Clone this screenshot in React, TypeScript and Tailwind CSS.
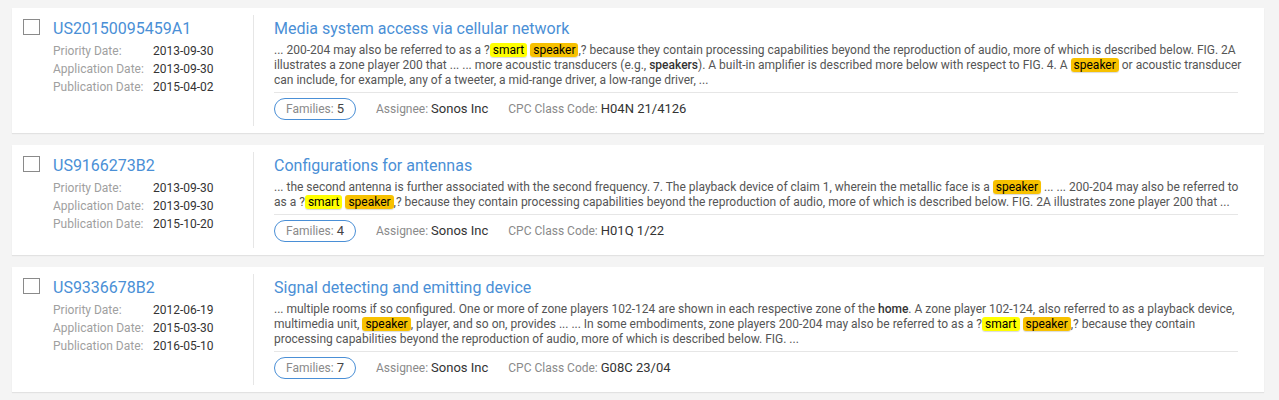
import type { ReactNode } from "react";

/* ================= TYPES ================= */

interface Patent {
  number: string;
  priority: string;
  application: string;
  publication: string;
  title: string;
  snippet: ReactNode;
  families: number;
  assignee: string;
  cpc: string;
}

/* ================= HIGHLIGHTS ================= */

function Smart({ children }: { children: ReactNode }) {
  return (
    <span className="rounded-[3px] bg-[#ffff00] px-[3px] text-black shadow-[0_1px_1px_rgba(0,0,0,0.15)]">
      {children}
    </span>
  );
}

function Speaker({ children }: { children: ReactNode }) {
  return (
    <span className="rounded-[3px] bg-[#f7c100] px-[3px] text-black shadow-[0_1px_1px_rgba(0,0,0,0.15)]">
      {children}
    </span>
  );
}

function B({ children }: { children: ReactNode }) {
  return <span className="font-medium text-[#333]">{children}</span>;
}

/* ================= DATA ================= */

const patents: Patent[] = [
  {
    number: "US20150095459A1",
    priority: "2013-09-30",
    application: "2013-09-30",
    publication: "2015-04-02",
    title: "Media system access via cellular network",
    snippet: (
      <>
        ... 200-204 may also be referred to as a ?<Smart>smart</Smart>{" "}
        <Speaker>speaker</Speaker>,? because they contain processing
        capabilities beyond the reproduction of audio, more of which is
        described below. FIG. 2A illustrates a zone player 200 that ... ... more
        acoustic transducers (e.g., <B>speakers</B>). A built-in amplifier is
        described more below with respect to FIG. 4. A{" "}
        <Speaker>speaker</Speaker> or acoustic transducer can include, for
        example, any of a tweeter, a mid-range driver, a low-range driver, ...
      </>
    ),
    families: 5,
    assignee: "Sonos Inc",
    cpc: "H04N 21/4126",
  },
  {
    number: "US9166273B2",
    priority: "2013-09-30",
    application: "2013-09-30",
    publication: "2015-10-20",
    title: "Configurations for antennas",
    snippet: (
      <>
        ... the second antenna is further associated with the second frequency.
        7. The playback device of claim 1, wherein the metallic face is a{" "}
        <Speaker>speaker</Speaker> ... ... 200-204 may also be referred to as a
        ?<Smart>smart</Smart> <Speaker>speaker</Speaker>,? because they contain
        processing capabilities beyond the reproduction of audio, more of which
        is described below. FIG. 2A illustrates zone player 200 that ...
      </>
    ),
    families: 4,
    assignee: "Sonos Inc",
    cpc: "H01Q 1/22",
  },
  {
    number: "US9336678B2",
    priority: "2012-06-19",
    application: "2015-03-30",
    publication: "2016-05-10",
    title: "Signal detecting and emitting device",
    snippet: (
      <>
        ... multiple rooms if so configured. One or more of zone players 102-124
        are shown in each respective zone of the <B>home</B>. A zone player
        102-124, also referred to as a playback device, multimedia unit,{" "}
        <Speaker>speaker</Speaker>, player, and so on, provides ... ... In some
        embodiments, zone players 200-204 may also be referred to as a ?
        <Smart>smart</Smart> <Speaker>speaker</Speaker>,? because they contain
        processing capabilities beyond the reproduction of audio, more of which
        is described below. FIG. ...
      </>
    ),
    families: 7,
    assignee: "Sonos Inc",
    cpc: "G08C 23/04",
  },
];

/* ================= MAIN COMPONENT ================= */

export default function App() {
  return (
    <div
      className="min-h-[400px] bg-[#f4f4f4] pb-4 pl-[12px] pr-[15px] pt-[8px]"
      style={{ fontFamily: "Roboto, 'Liberation Sans', sans-serif" }}
    >
      <div className="flex flex-col gap-[12px]">
        {patents.map((p) => (
          <PatentCard key={p.number} patent={p} />
        ))}
      </div>
    </div>
  );
}

function PatentCard({ patent }: { patent: Patent }) {
  return (
    <div className="flex bg-white shadow-[0_1px_1px_rgba(0,0,0,0.07)]">
      {/* LEFT COLUMN */}
      <div className="flex w-[241px] shrink-0 gap-[13px] pl-[11px] pt-[11px]">
        <div className="h-[16px] w-[17px] shrink-0 border border-[#8a8a8a] bg-white" />
        <div>
          <div className="text-[16px] leading-[20px] text-[#4a8fd6]">
            {patent.number}
          </div>
          <div className="mt-[3px] text-[12px] leading-[18px]">
            <DateRow label="Priority Date:" value={patent.priority} />
            <DateRow label="Application Date:" value={patent.application} />
            <DateRow label="Publication Date:" value={patent.publication} />
          </div>
        </div>
      </div>

      {/* DIVIDER */}
      <div className="my-[7px] w-px shrink-0 bg-[#e6e6e6]" />

      {/* RIGHT COLUMN */}
      <div className="min-w-0 flex-1 pb-[13px] pl-[20px] pr-[26px] pt-[11px]">
        <div className="text-[16px] leading-[20px] text-[#4a8fd6]">
          {patent.title}
        </div>
        <div className="mt-[4px] border-b border-[#e6e6e6] pb-[4px]">
          <div className="mr-[-8px] text-[12px] leading-[15px] text-[#555]">
            {patent.snippet}
          </div>
        </div>
        <div className="mt-[5px] flex items-center gap-[20px] text-[12px]">
          <div className="flex h-[22px] items-center rounded-full border border-[#4a8fd6] px-[11px]">
            <span className="text-[#8a8a8a]">Families:&nbsp;</span>
            <span className="text-[13px] text-[#444]">{patent.families}</span>
          </div>
          <div>
            <span className="text-[#8a8a8a]">Assignee: </span>
            <span className="text-[13px] text-[#333]">{patent.assignee}</span>
          </div>
          <div>
            <span className="text-[#8a8a8a]">CPC Class Code: </span>
            <span className="text-[13px] text-[#333]">{patent.cpc}</span>
          </div>
        </div>
      </div>
    </div>
  );
}

function DateRow({ label, value }: { label: string; value: string }) {
  return (
    <div className="flex">
      <span className="w-[100px] shrink-0 text-[#a0a0a0]">{label}</span>
      <span className="text-[#333]">{value}</span>
    </div>
  );
}
